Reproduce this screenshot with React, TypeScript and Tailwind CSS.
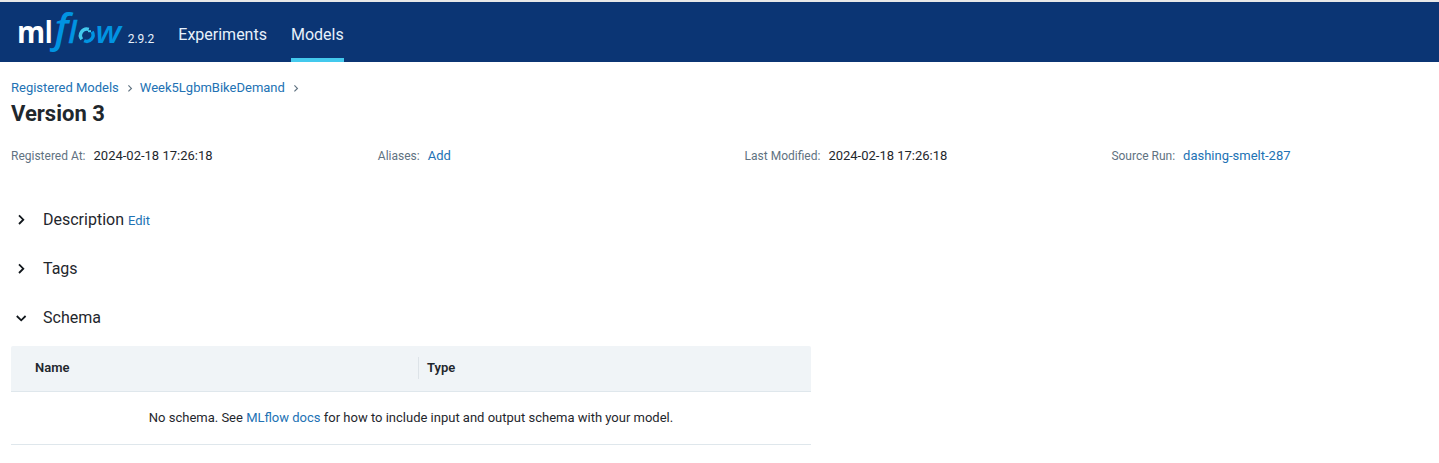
import React from 'react';

const link = 'text-[#2272b4]';

function Logo() {
  return (
    <svg width="108" height="44" viewBox="16 10 108 44" className="block overflow-visible" role="img" aria-label="mlflow">
      <g fontFamily="'Open Sans'" fontWeight="600">
        <text transform="translate(17 43) scale(.94 1)" fontSize="30.5" fontWeight="700" fill="#fff">m</text>
        <text transform="translate(44.8 43) scale(.85 1)" fontSize="30.5" fontWeight="700" fill="#fff">l</text>
        <g fontStyle="italic" fill="#0194e2">
          <text transform="translate(54.6 42.2) scale(1.04 1)" fontSize="39.5">f</text>
          <text transform="translate(68.3 43)" fontSize="30.5" stroke="#0194e2" strokeWidth=".4">l</text>
          <text transform="translate(95.6 43) scale(1.12 1)" fontSize="30.5">w</text>
        </g>
      </g>
      <g fill="none" strokeWidth="3.4">
        <path d="M81.8 39.3a6.4 6.4 0 0 1 7-10" stroke="#43c9ed" />
        <path d="M88 31.2h3" stroke="#43c9ed" strokeWidth="2" />
        <path d="M92.1 31.6a6.4 6.4 0 0 1-8 9.2" stroke="#0194e2" />
      </g>
    </svg>
  );
}

function Crumb() {
  return (
    <svg width="5" height="8" viewBox="0 0 5 8" className="block" fill="none" stroke="#5f7281" strokeWidth="1.2">
      <path d="M.4 1.4l3 3-3 3" />
    </svg>
  );
}

function Section({ title, open, children }: { title: string; open?: boolean; children?: React.ReactNode }) {
  return (
    <div className="flex h-[49px] items-center">
      <span className="flex w-8 pl-[5px]">
        <svg width="12" height="12" viewBox="0 0 12 12" fill="none" stroke="#11171c" strokeWidth="1.8">
          <path d={open ? 'M.8 4l4.4 4.3L9.6 4' : 'M3 1.4l4.3 4.3L3 10'} />
        </svg>
      </span>
      <span className="text-[16px] leading-[22px]">{title}</span>
      {children}
    </div>
  );
}

function Meta({ label, children }: { label: string; children: React.ReactNode }) {
  return (
    <div className="flex w-[366.8px] shrink-0 items-center gap-2 leading-5">
      <span className="text-[12px] text-[#5f7281]">{label}</span>
      {children}
    </div>
  );
}

export default function App() {
  return (
    <div className="h-[463px] overflow-hidden bg-white text-[13px] text-[#1f272d]" style={{ fontFamily: 'Roboto, sans-serif' }}>
      <header className="flex h-[62px] border-t-2 border-[#e8e8e8] bg-[#0b3574] text-[#e7f1fb]">
        <div className="pt-2 pl-4">
          <Logo />
        </div>
        <span className="mt-[28px] ml-[3.7px] w-[50.6px] text-[12px] leading-[18px]">2.9.2</span>
        <nav className="flex gap-6 text-[16px]">
          <a className="pt-[21px] leading-6">Experiments</a>
          <a className="border-b-4 border-[#43c9ed] pt-[21px] leading-6">Models</a>
        </nav>
      </header>
      <main className="pl-[11px]">
        <div className="mt-4 flex h-5 items-center">
          <a className={link}>Registered Models</a>
          <span className="mr-[7px] ml-[9px]"><Crumb /></span>
          <a className={link}>Week5LgbmBikeDemand</a>
          <span className="ml-[9px]"><Crumb /></span>
        </div>
        <h1 className="text-[22px] leading-[32px] font-bold text-[#1f272d]">Version 3</h1>
        <div className="mt-4 flex">
          <Meta label="Registered At:">2024-02-18 17:26:18</Meta>
          <Meta label="Aliases:"><a className={link}>Add</a></Meta>
          <Meta label="Last Modified:">2024-02-18 17:26:18</Meta>
          <Meta label="Source Run:"><a className={link}>dashing-smelt-287</a></Meta>
        </div>
        <div className="mt-[29px]">
          <Section title="Description"><a className={`mt-[2px] ml-1 ${link}`}>Edit</a></Section>
          <Section title="Tags" />
          <Section title="Schema" open />
        </div>
        <div className="mt-1 w-[800px]">
          <div className="flex h-[46px] items-center rounded-t-[2px] border-b border-[#dfe7ec] bg-[#f0f4f7] pb-px font-semibold">
            <span className="w-[407px] pl-6">Name</span>
            <span className="flex h-[22px] items-center border-l border-[#dde3e8] pl-2">Type</span>
          </div>
          <div className="flex h-[53px] items-center justify-center border-b border-[#dfe7ec]">
            <p>No schema. See <a className={link}>MLflow docs</a> for how to include input and output schema with your model.</p>
          </div>
        </div>
      </main>
    </div>
  );
}
